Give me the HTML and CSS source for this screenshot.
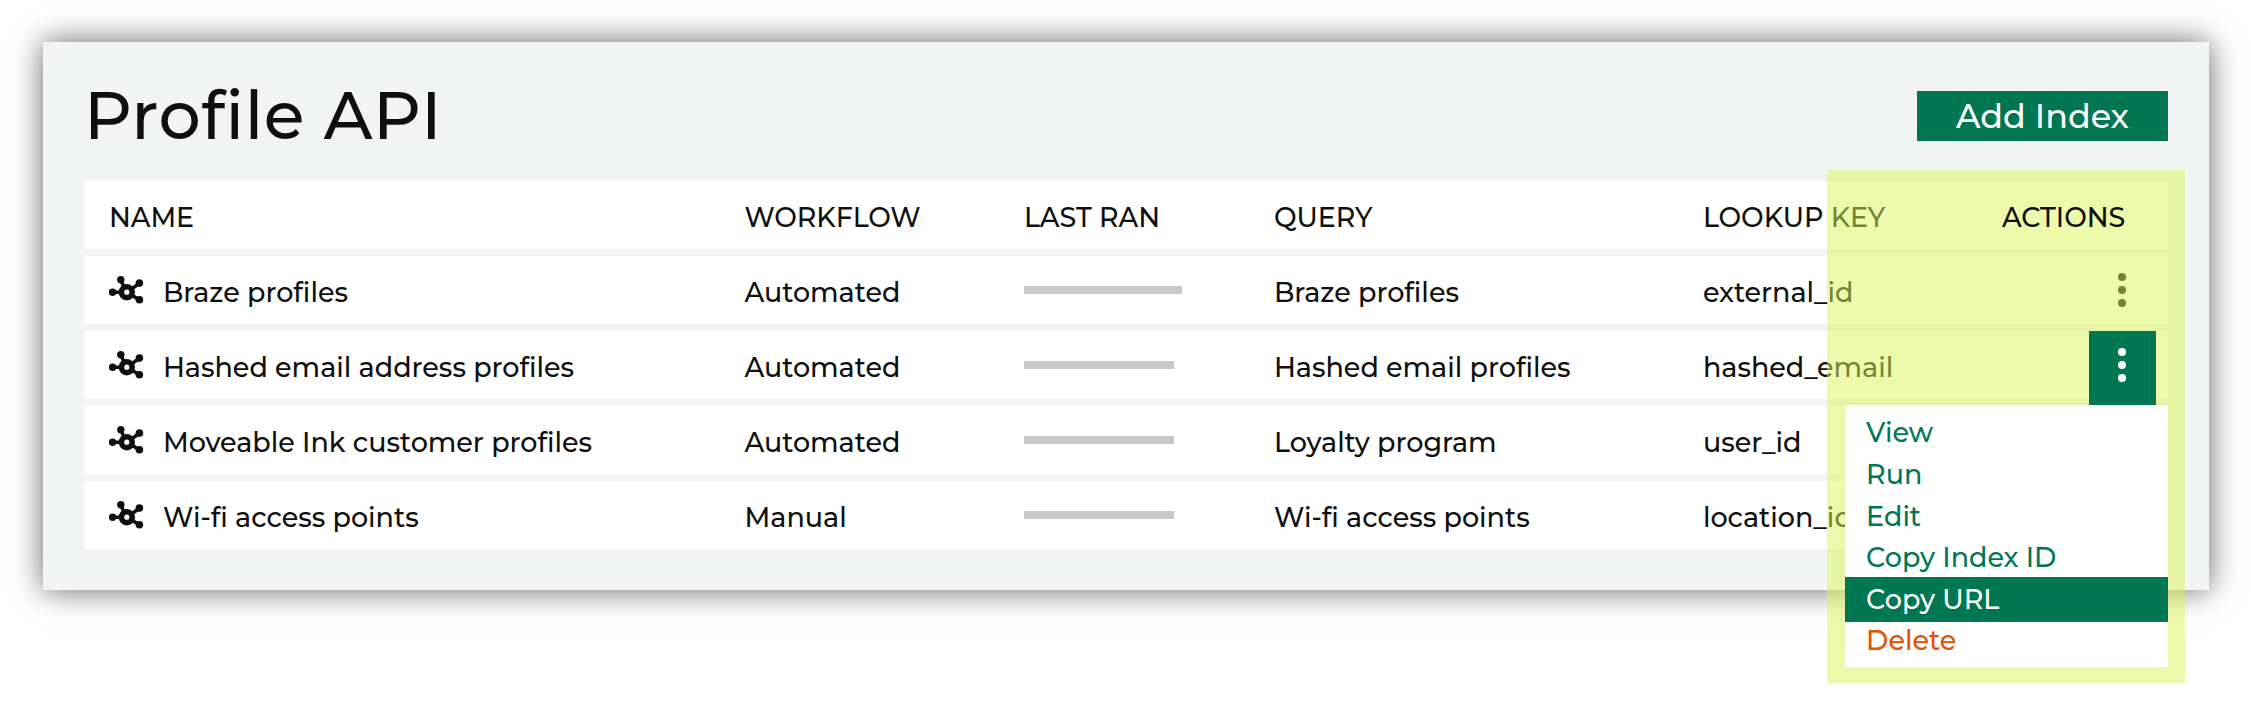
FILE: index.html
```html
<!DOCTYPE html>
<html lang="en">
<head>
<meta charset="utf-8">
<title>Profile API</title>
<link rel="stylesheet" href="styles.css">
</head>
<body>
<svg class="defs" width="0" height="0">
  <symbol id="hub" viewBox="0 0 36 28">
    <g fill="none" stroke="currentColor">
      <path stroke-width="3.6" d="M3.4 16.2H12M11.8 4 16 13M30.4 7.2 22 13.4M30.4 24 22 18.6"/>
      <circle cx="17.8" cy="16.2" r="5.4" stroke-width="5.6"/>
    </g>
    <g fill="currentColor">
      <circle cx="3.6" cy="16.2" r="3.7"/><circle cx="11.8" cy="3.8" r="3.7"/>
      <circle cx="30.4" cy="7.1" r="3.8"/><circle cx="30.4" cy="23.8" r="3.8"/>
    </g>
  </symbol>
  <symbol id="dots" viewBox="0 0 8 34">
    <g fill="currentColor"><circle cx="4" cy="4" r="4"/><circle cx="4" cy="17" r="4"/><circle cx="4" cy="30" r="4"/></g>
  </symbol>
</svg>
<main class="panel">
  <header class="top">
    <h1 class="title">Profile API</h1>
    <button class="add">Add Index</button>
  </header>
  <div class="highlight"></div>
  <section class="table">
    <div class="row head">
      <span>NAME</span><span>WORKFLOW</span><span>LAST RAN</span><span>QUERY</span><span>LOOKUP KEY</span><span class="actions-label">ACTIONS</span>
    </div>
    <div class="row">
      <span class="name"><svg class="hub"><use href="#hub"/></svg>Braze profiles</span><span>Automated</span><i class="bar long"></i><span>Braze profiles</span><span>external_id</span>
      <div class="action"><svg class="dots"><use href="#dots"/></svg></div>
    </div>
    <div class="row">
      <span class="name"><svg class="hub"><use href="#hub"/></svg>Hashed email address profiles</span><span>Automated</span><i class="bar"></i><span>Hashed email profiles</span><span>hashed_email</span>
      <div class="action open"><svg class="dots"><use href="#dots"/></svg></div>
      <nav class="menu">
        <a>View</a><a>Run</a><a>Edit</a><a>Copy Index ID</a><a class="selected">Copy URL</a><a class="danger">Delete</a>
      </nav>
    </div>
    <div class="row">
      <span class="name"><svg class="hub"><use href="#hub"/></svg>Moveable Ink customer profiles</span><span>Automated</span><i class="bar"></i><span>Loyalty program</span><span>user_id</span>
    </div>
    <div class="row">
      <span class="name"><svg class="hub"><use href="#hub"/></svg>Wi-fi access points</span><span>Manual</span><i class="bar"></i><span>Wi-fi access points</span><span>location_id</span>
    </div>
  </section>
</main>
</body>
</html>
```
FILE: styles.css
```css
* { box-sizing: border-box; }
body {
  margin: 0;
  padding: 42.3px 42px 0 42.6px;
  height: 720px;
  overflow: hidden;
  background: #fff;
  color: #0f0f0f;
  font: 500 27px/34px Montserrat, Inter, "Open Sans", sans-serif;
  font-variant-ligatures: none;
}
.defs { display: block; position: absolute; }
.panel {
  position: relative;
  height: 547.7px;
  padding: 0 41.3px;
  background: #f1f4f3;
  box-shadow: 0 0 30px rgba(0, 0, 0, .6);
}
.top {
  display: flex;
  justify-content: space-between;
  align-items: flex-start;
  height: 139px;
}
.title {
  margin: 34px 0 0 0;
  font-size: 66.5px;
  font-weight: 500;
  line-height: 80px;
  letter-spacing: .65px;
}
.add {
  width: 250.4px;
  height: 50.4px;
  margin-top: 48.8px;
  padding: 0;
  border: 0;
  background: #007752;
  color: #fff;
  font: inherit;
  font-size: 33.4px;
  line-height: 50px;
}
.table {
  display: flex;
  flex-direction: column;
  gap: 7.7px;
}
.row {
  position: relative;
  display: grid;
  grid-template-columns: 635.6px 279.4px 250px 429px 1fr;
  height: 67.3px;
  padding: 19.5px 0 0 25px;
  background: #fff;
  white-space: nowrap;
}
.head {
  grid-template-columns: 635.6px 279.4px 250px 429px 299px 1fr;
  font-size: 26.9px;
}
.name { display: flex; }
.hub { width: 36px; height: 28px; margin: 0 18px 0 0; }
.bar { width: 150px; height: 8.6px; margin-top: 10px; background: #c8c8c8; }
.bar.long { width: 158px; }
.highlight {
  position: absolute;
  z-index: 1;
  left: 1784.4px;
  top: 127.7px;
  width: 358.4px;
  height: 513px;
  background: rgba(219, 245, 87, .5);
}
.actions-label { position: relative; z-index: 2; }
.action {
  position: absolute;
  right: 11.8px;
  top: 0;
  width: 67px;
  height: 67.3px;
  display: flex;
  justify-content: center;
  padding-top: 16.5px;
}
.action.open {
  z-index: 2;
  height: 74px;
  background: #007752;
  color: #fff;
}
.dots { width: 8px; height: 34px; }
.menu {
  position: absolute;
  z-index: 3;
  right: 0;
  top: 73.7px;
  width: 323px;
  height: 262px;
  padding-top: 6px;
  background: #fff;
}
.menu a {
  display: block;
  height: 41.6px;
  padding: 5.4px 0 0 21.4px;
  color: #007752;
}
.menu .selected {
  height: 44.3px;
  margin-bottom: -2.7px;
  background: #007752;
  color: #fff;
}
.menu .danger { color: #e35205; }
```
